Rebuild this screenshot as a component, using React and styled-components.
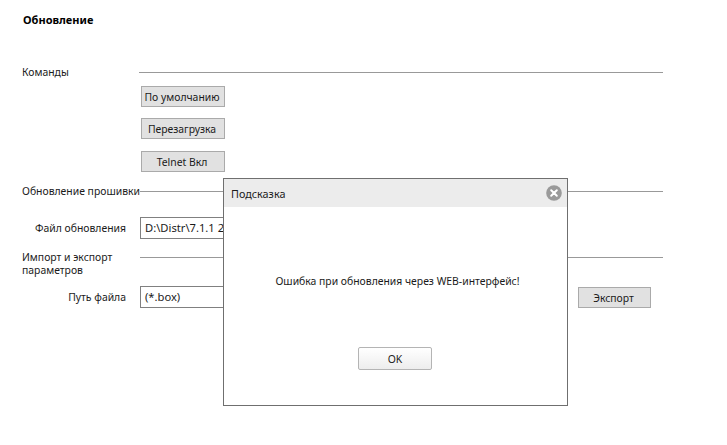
import React from "react";
import styled, { createGlobalStyle } from "styled-components";

const Global = createGlobalStyle`
  html, body {
    margin: 0;
    padding: 0;
    background: #fff;
    font-family: "Noto Sans", "Liberation Sans", sans-serif;
    font-size: 10.4px;
    color: #1a1a1a;
  }
`;

const Page = styled.div`
  position: relative;
  width: 727px;
  height: 445px;
  overflow: hidden;
  box-sizing: border-box;
  padding: 12px 64px 0 22px;
`;

const Title = styled.h1`
  margin: 0 0 39px;
  padding-left: 1px;
  font-size: 11px;
  line-height: 15px;
  font-weight: 700;
  color: #000;
`;

const SectionHead = styled.div`
  display: grid;
  grid-template-columns: ${({ $label }) => $label}px 1fr;
  align-items: ${({ $top }) => ($top ? "start" : "center")};
  margin-bottom: ${({ $gap }) => $gap}px;
`;

const SectionLabel = styled.div`
  line-height: 13px;
  white-space: ${({ $nowrap }) => ($nowrap ? "nowrap" : "normal")};
`;

const Rule = styled.div`
  height: 1px;
  background: #999;
  margin-top: ${({ $top }) => $top || 0}px;
`;

const ButtonStack = styled.div`
  display: flex;
  flex-direction: column;
  gap: 11px;
  padding-left: 119px;
  margin-bottom: 13px;
`;

const GrayButton = styled.button`
  box-sizing: border-box;
  width: ${({ $w }) => $w}px;
  height: 21px;
  padding: 0 2px 0 0;
  margin-top: ${({ $top }) => $top || 0}px;
  border: 1px solid #aaa;
  background: #e1e1e1;
  color: #1a1a1a;
  font: inherit;
`;

const FieldRow = styled.div`
  display: grid;
  grid-template-columns: 104px 1fr 73px;
  column-gap: 14px;
  align-items: end;
  padding-right: 12px;
  margin-bottom: ${({ $gap }) => $gap || 0}px;
`;

const FieldLabel = styled.label`
  text-align: right;
  line-height: 22px;
`;

const TextField = styled.div`
  box-sizing: border-box;
  height: 22px;
  border: 1px solid #808080;
  padding: 0 4px;
  line-height: 20px;
  white-space: nowrap;
  overflow: hidden;
  font-size: 11.2px;
`;

const Modal = styled.div`
  position: absolute;
  left: 223px;
  top: 178px;
  box-sizing: border-box;
  width: 345px;
  height: 228px;
  display: flex;
  flex-direction: column;
  background: #fff;
  border: 1px solid #6f6f6f;
`;

const ModalBar = styled.div`
  height: 28px;
  flex: none;
  display: flex;
  align-items: center;
  justify-content: space-between;
  padding: 0 5px 0 7px;
  background: #ececec;
  font-size: 10.8px;
`;

const CloseIcon = styled.svg`
  width: 16px;
  height: 16px;
  display: block;
`;

const ModalBody = styled.div`
  flex: 1;
  display: flex;
  flex-direction: column;
  align-items: center;
  padding: 67px 1px 0 0;
`;

const Message = styled.div`
  line-height: 15px;
  margin: 0 0 58px 5px;
`;

const OkButton = styled.button`
  box-sizing: border-box;
  width: 74px;
  height: 23px;
  padding: 0;
  border: 1px solid #b4b4b4;
  border-radius: 2px;
  background: linear-gradient(#ffffff, #ededed);
  color: #1a1a1a;
  font: inherit;
`;

export default function App() {
  return (
    <Page>
      <Global />
      <Title>Обновление</Title>

      <SectionHead $label={117} $gap={7}>
        <SectionLabel>Команды</SectionLabel>
        <Rule />
      </SectionHead>
      <ButtonStack>
        <GrayButton $w={84}>По умолчанию</GrayButton>
        <GrayButton $w={84}>Перезагрузка</GrayButton>
        <GrayButton $w={84} $top={1}>Telnet Вкл</GrayButton>
      </ButtonStack>

      <SectionHead $label={118} $gap={19}>
        <SectionLabel $nowrap>Обновление прошивки</SectionLabel>
        <Rule />
      </SectionHead>
      <FieldRow $gap={12}>
        <FieldLabel>Файл обновления</FieldLabel>
        <TextField>D:\Distr\7.1.1 20150101.box</TextField>
        <span />
      </FieldRow>

      <SectionHead $label={118} $gap={9} $top>
        <SectionLabel>Импорт и экспорт параметров</SectionLabel>
        <Rule $top={6} />
      </SectionHead>
      <FieldRow>
        <FieldLabel>Путь файла</FieldLabel>
        <TextField>(*.box)</TextField>
        <GrayButton $w={73}>Экспорт</GrayButton>
      </FieldRow>

      <Modal>
        <ModalBar>
          <span>Подсказка</span>
          <CloseIcon viewBox="0 0 16 16">
            <circle cx="8" cy="8" r="7.8" fill="#9a9a9a" />
            <path d="M5.2 5.2l5.6 5.6M10.800 5.200l-5.600 5.600" stroke="#fff" strokeWidth="2" strokeLinecap="round" />
          </CloseIcon>
        </ModalBar>
        <ModalBody>
          <Message>Ошибка при обновления через WEB-интерфейс!</Message>
          <OkButton>OK</OkButton>
        </ModalBody>
      </Modal>
    </Page>
  );
}
